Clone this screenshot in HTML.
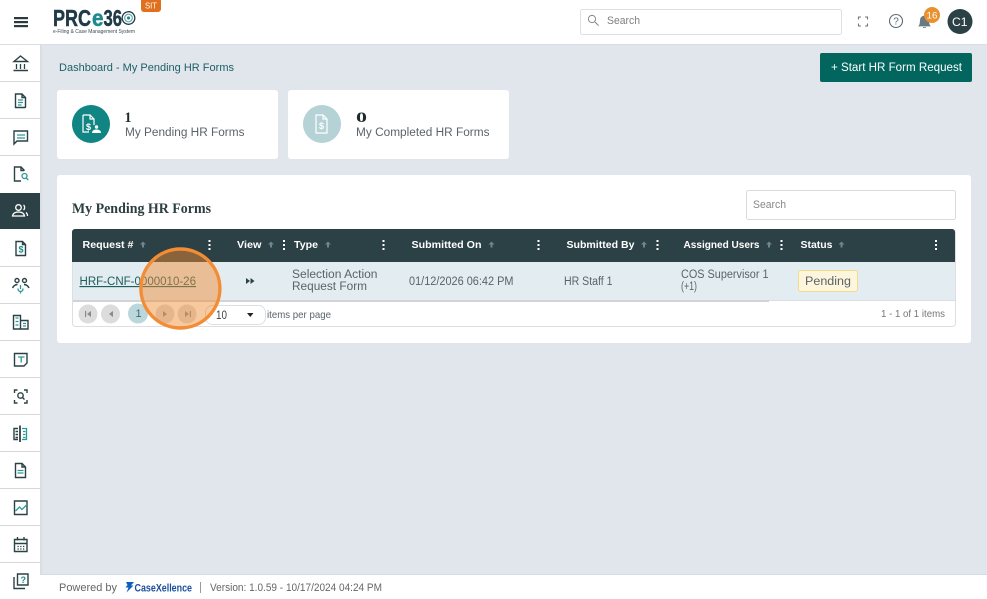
<!DOCTYPE html>
<html><head><meta charset="utf-8"><style>
html,body{margin:0;padding:0;width:987px;height:599px;overflow:hidden;background:#e1e6ec}
svg{display:block}
text{font-family:"Liberation Sans",sans-serif;font-size:11.5px;fill:#5a6468}
.s{font-family:"Liberation Serif",serif;font-weight:700;fill:#1d2a2c}
.h{fill:#fff;font-weight:700;font-size:10.5px}
.i{fill:none;stroke:#2c4145;stroke-width:1.4}
.t{fill:none;stroke:#2a9a98;stroke-width:1.3}
</style></head><body>
<svg width="987" height="599" viewBox="0 0 987 599" xmlns="http://www.w3.org/2000/svg">
<rect width="987" height="599" fill="#e1e6ec"/>
<!-- sidebar -->
<rect x="40" y="44" width="2" height="530" fill="#d9dee4"/>
<rect x="0" y="44" width="40" height="555" fill="#fff"/>
<g fill="#d8d8d8">
<rect y="81" width="40" height="1"/><rect y="118" width="40" height="1"/><rect y="155" width="40" height="1"/>
<rect y="266" width="40" height="1"/><rect y="303" width="40" height="1"/><rect y="340" width="40" height="1"/><rect y="377" width="40" height="1"/><rect y="414" width="40" height="1"/><rect y="451" width="40" height="1"/><rect y="488" width="40" height="1"/><rect y="525" width="40" height="1"/><rect y="562" width="40" height="1"/>
</g>
<rect y="193" width="40" height="36" fill="#2c4145"/>
<!-- header -->
<rect y="574" x="40" width="947" height="1" fill="#d5dbe1"/>
<rect x="40" y="575" width="947" height="24" fill="#fff"/>
<rect width="987" height="44" fill="#fff"/>
<rect y="44" width="987" height="1" fill="#d9dee3"/>
<g fill="#2c3a3e"><rect x="14" y="17" width="14" height="2.2"/><rect x="14" y="21" width="14" height="2.2"/><rect x="14" y="25" width="14" height="2.2"/></g>
<!-- logo -->
<text x="53" y="26" font-weight="700" style="font-size:23px;fill:#1f3b47;stroke:#1f3b47;stroke-width:.5" textLength="38" lengthAdjust="spacingAndGlyphs">PRC</text>
<text x="92" y="26" font-weight="700" style="font-size:23px;fill:#1d8a8c;stroke:#1d8a8c;stroke-width:.5" textLength="11.5" lengthAdjust="spacingAndGlyphs">e</text>
<text x="103.500" y="26" font-weight="700" style="font-size:23px;fill:#1f3b47;stroke:#1f3b47;stroke-width:.5" textLength="18.500" lengthAdjust="spacingAndGlyphs">36</text>
<circle cx="128.500" cy="18" r="6.300" fill="none" stroke="#1f3b47" stroke-width="1.300"/>
<circle cx="128.500" cy="18" r="3.800" fill="none" stroke="#6fa7ab" stroke-width="1.200"/>
<circle cx="128.500" cy="18" r="1.600" fill="#1d8a8c"/>
<text x="53" y="33" style="font-size:5px;fill:#3b4a50" textLength="82" lengthAdjust="spacingAndGlyphs">e-Filing &amp; Case Management System</text>
<path d="M141 0h20v9a3 3 0 0 1-3 3h-14a3 3 0 0 1-3-3z" fill="#e0701d"/>
<text x="145" y="8.500" style="font-size:8px;fill:#fff" textLength="12" lengthAdjust="spacingAndGlyphs">SIT</text>
<!-- top search -->
<rect x="580.500" y="9.500" width="261" height="25" rx="2" fill="#fff" stroke="#dcdfe3"/>
<circle cx="592" cy="19" r="3.600" fill="none" stroke="#888" stroke-width="1"/><path d="M595 22l3.600 3.600" stroke="#888" stroke-width="1"/>
<text x="607" y="24" style="font-size:11px;fill:#808080" textLength="33" lengthAdjust="spacingAndGlyphs">Search</text>
<path d="M858.500 19.500v-2.500h2.500M865 17h2.500v2.500M867.500 23.500v2.500H865M861 26h-2.500v-2.500" fill="none" stroke="#6a787c" stroke-width="1.100"/>
<circle cx="896" cy="21" r="6.500" fill="none" stroke="#5a6a70" stroke-width="1.100"/>
<text x="893.200" y="24.600" style="font-size:10px;fill:#5a6a70">?</text>
<path d="M919 26c1.500-1.500 1-3.500 1.500-6a4 4 0 0 1 8 0c.5 2.500 0 4.500 1.500 6zM923 27.500h3" fill="#6a7a80" stroke="#6a7a80" stroke-width=".8"/>
<circle cx="932" cy="15" r="8" fill="#e8912d"/>
<text x="926.500" y="18.500" style="font-size:9.500px;fill:#fff" textLength="11" lengthAdjust="spacingAndGlyphs">16</text>
<circle cx="960" cy="21.500" r="12.500" fill="#2c4145"/>
<text x="952" y="26" style="font-size:12px;fill:#fff" textLength="15.500" lengthAdjust="spacingAndGlyphs">C1</text>
<!-- side icons -->
<g class="i">
<path d="M14 61.500L20.500 56l7 5.500zM13.500 70.500h14.500"/>
<path d="M15.500 94h6.500l3.500 3.500V107a.5.5 0 0 1-.5.500H15.500zM22 94v3.500h3.500"/>
<path d="M14 131h13.500v10H17l-3 3z"/>
<path d="M24 171v-1l-3-3h-6.500v14H21M21 167v3.500h3"/>
<path d="M16 241.500h6.500l3 3V255.500H16zM22.500 241.500v3h3"/>
<circle cx="17" cy="280.500" r="2"/><circle cx="24.500" cy="280.500" r="2"/><path d="M12.500 288c1-2 3-3.500 5-3.500M29 288c-1-2-3-3.500-5-3.500"/>
<path d="M13.500 315.500h7v13.500h-7zM20.500 320.500h7.500v8.500h-7.500"/>
<path d="M14.500 353.500h12.500v9.500l-3 3h-9.500z"/>
<path d="M14.500 393v-3h3M24 390h3v3M27 400v3h-3M17.500 403h-3v-3"/><circle cx="20.500" cy="395.500" r="2.700"/><path d="M22.500 397.500l2 2"/>
<path d="M20 425.500v16.500" stroke-width="1.800"/><path d="M18 428.500h-4v11h4M15.500 431.500h2.500M15.500 434.500h2.500M15.500 437.500h2.500"/>
<path d="M15.500 463.500h6.500l3.500 3.500V477.500h-10zM22 463.500v3.500h3.500"/>
<path d="M14.500 501h12.500v13.500H14.500z"/>
<path d="M14.500 539.500h12.500v12H14.500zM14.500 543.500h12.500M17.500 537v3.500M24 537v3.500"/>
<path d="M17.500 574h10.500v11H17.500zM14 577v11.500h11"/>
</g>
<g class="t">
<path d="M16.500 64v5M20.500 64v5M24.500 64v5" stroke="#2c4145"/>
<path d="M18 100h5M18 102.500h5M18 105h3.500"/>
<path d="M17 135h8M17 138h8"/>
<circle cx="24.500" cy="176" r="2.500"/><path d="M26.300 178l2 2"/>
<path d="M20.500 285v4"/><path d="M18 288.500c0 2 1 3 2.500 3s2.500-1 2.500-3M20.500 291.500v2"/>
<path d="M15.500 318h3M15.500 321.500h3M15.500 325h3M23 323.500h3M23 326h3"/>
<path d="M18 357h6.500M21.200 357v5.500"/>
<path d="M22 428.500h4.500v11H22M23 431.500h2.500M23 434.500h2.500M23 437.500h2.500"/>
<path d="M17.500 470.500h6M17.500 473h6"/>
<path d="M15.500 511l4-4 2.500 2.500 5-5"/>
<path d="M17.500 546.500h1.300M20.200 546.500h1.300M23 546.500h1.300M17.500 549h1.300M20.200 549h1.300M23 549h1.300" stroke="#2c4145"/>
</g>
<text x="18.500" y="252.500" style="font-size:9px;font-weight:700;fill:#1d8a88">$</text>
<text x="20.500" y="583" style="font-size:9px;font-weight:700;fill:#1d8a88">?</text>
<g fill="none" stroke="#fff" stroke-width="1.300">
<circle cx="18.500" cy="207.500" r="2.800"/><path d="M12.500 216c.5-3 3-4 6-4s5.500 1 6 4z"/><path d="M23.500 205c1.500 1 1.500 4 0 5M26 212.500c1 .8 1.500 2 1.500 3.500"/>
</g>
<!-- breadcrumb & button -->
<text x="59" y="71" style="font-size:11px;fill:#1d5f68" textLength="175" lengthAdjust="spacingAndGlyphs">Dashboard - My Pending HR Forms</text>
<rect x="820" y="53" width="152" height="29" rx="2" fill="#02665f"/>
<text x="831" y="71" style="font-size:11.500px;fill:#fff" textLength="131" lengthAdjust="spacingAndGlyphs">+ Start HR Form Request</text>
<!-- cards -->
<rect x="57" y="90" width="221" height="69" rx="3" fill="#fff"/>
<rect x="288" y="90" width="221" height="69" rx="3" fill="#fff"/>
<circle cx="91" cy="124" r="19" fill="#118584"/>
<circle cx="322" cy="124" r="19" fill="#b5d2d6"/>
<g fill="none" stroke="#fff" stroke-width="1.200">
<path d="M83 115h7l4 4v6M83 115v17h6M90 115v4h4"/>
<path d="M316 115h7l4 4v14h-11zM323 115v4h4"/>
</g>
<text x="86" y="130" style="font-size:9px;font-weight:700;fill:#fff">$</text>
<text x="319" y="129" style="font-size:9px;font-weight:700;fill:#fff">$</text>
<circle cx="96.500" cy="127" r="1.700" fill="#fff"/><path d="M92 133c0-2.500 2-3.500 4.500-3.500s4.500 1 4.500 3.500z" fill="#fff"/>
<text class="s" x="124.500" y="122" style="font-size:15px" textLength="7" lengthAdjust="spacingAndGlyphs">1</text>
<text x="125" y="136" textLength="119.500" lengthAdjust="spacingAndGlyphs">My Pending HR Forms</text>
<text class="s" x="356" y="122" style="font-size:15px" textLength="11" lengthAdjust="spacingAndGlyphs">0</text>
<text x="356" y="136" textLength="133.500" lengthAdjust="spacingAndGlyphs">My Completed HR Forms</text>
<!-- table card -->
<rect x="57" y="175" width="914" height="168" rx="3" fill="#fff"/>
<text class="s" x="72" y="213" style="font-size:14.500px;fill:#2c3e40" textLength="139" lengthAdjust="spacingAndGlyphs">My Pending HR Forms</text>
<rect x="746.500" y="190.500" width="209" height="29" rx="2" fill="#fff" stroke="#d8dbde"/>
<text x="753" y="208" style="font-size:11px;fill:#888" textLength="33" lengthAdjust="spacingAndGlyphs">Search</text>
<rect x="72.500" y="229.500" width="883" height="97" rx="3" fill="#fff" stroke="#dcdfe2"/>
<path d="M72 262v-30a3 3 0 0 1 3-3h877a3 3 0 0 1 3 3v30z" fill="#2c4145"/>
<rect x="73" y="262" width="882" height="38" fill="#e3ecf0"/>
<rect x="73" y="300" width="696" height="2" fill="#d0d4d8"/>
<rect x="769" y="300" width="186" height="1" fill="#dcdfe2"/>
<g>
<text class="h" x="82.500" y="248" textLength="51" lengthAdjust="spacingAndGlyphs">Request #</text>
<text class="h" x="237" y="248" textLength="24.500" lengthAdjust="spacingAndGlyphs">View</text>
<text class="h" x="294" y="248" textLength="24" lengthAdjust="spacingAndGlyphs">Type</text>
<text class="h" x="411.500" y="248" textLength="70" lengthAdjust="spacingAndGlyphs">Submitted On</text>
<text class="h" x="566.500" y="248" textLength="68" lengthAdjust="spacingAndGlyphs">Submitted By</text>
<text class="h" x="683.500" y="248" textLength="76" lengthAdjust="spacingAndGlyphs">Assigned Users</text>
<text class="h" x="800.500" y="248" textLength="32" lengthAdjust="spacingAndGlyphs">Status</text>
</g>
<g fill="#71858a">
<path d="M143 241.500l3 3h-2v3h-2v-3h-2z"/>
<path d="M271 241.500l3 3h-2v3h-2v-3h-2z"/><path d="M328 241.500l3 3h-2v3h-2v-3h-2z"/><path d="M491.500 241.500l3 3h-2v3h-2v-3h-2z"/><path d="M644 241.500l3 3h-2v3h-2v-3h-2z"/><path d="M769 241.500l3 3h-2v3h-2v-3h-2z"/><path d="M841.500 241.500l3 3h-2v3h-2v-3h-2z"/>
</g>
<g fill="#fff">
<rect x="208.500" y="240" width="2" height="2"/><rect x="208.500" y="244" width="2" height="2"/><rect x="208.500" y="248" width="2" height="2"/>
<rect x="283" y="240" width="2" height="2"/><rect x="283" y="244" width="2" height="2"/><rect x="283" y="248" width="2" height="2"/>
<rect x="382.500" y="240" width="2" height="2"/><rect x="382.500" y="244" width="2" height="2"/><rect x="382.500" y="248" width="2" height="2"/>
<rect x="537.500" y="240" width="2" height="2"/><rect x="537.500" y="244" width="2" height="2"/><rect x="537.500" y="248" width="2" height="2"/>
<rect x="656.500" y="240" width="2" height="2"/><rect x="656.500" y="244" width="2" height="2"/><rect x="656.500" y="248" width="2" height="2"/>
<rect x="780.500" y="240" width="2" height="2"/><rect x="780.500" y="244" width="2" height="2"/><rect x="780.500" y="248" width="2" height="2"/>
<rect x="935" y="240" width="2" height="2"/><rect x="935" y="244" width="2" height="2"/><rect x="935" y="248" width="2" height="2"/>
</g>
<!-- row -->
<text x="79.500" y="285" style="fill:#1c5e5e" text-decoration="underline" textLength="116.500" lengthAdjust="spacingAndGlyphs">HRF-CNF-0000010-26</text>
<path d="M246 278l4 3-4 3zM250.500 278l4 3-4 3z" fill="#2c4145"/>
<text x="292" y="278" textLength="85.500" lengthAdjust="spacingAndGlyphs">Selection Action</text>
<text x="292" y="290" textLength="75" lengthAdjust="spacingAndGlyphs">Request Form</text>
<text x="409" y="285" textLength="104.500" lengthAdjust="spacingAndGlyphs">01/12/2026 06:42 PM</text>
<text x="564" y="285" textLength="48.500" lengthAdjust="spacingAndGlyphs">HR Staff 1</text>
<text x="681" y="278" textLength="87.500" lengthAdjust="spacingAndGlyphs">COS Supervisor 1</text>
<text x="681" y="290" textLength="16" lengthAdjust="spacingAndGlyphs">(+1)</text>
<rect x="798.500" y="270.500" width="59" height="21" rx="2.500" fill="#fdf6dc" stroke="#f2dc8c"/>
<text x="805" y="285" textLength="46" lengthAdjust="spacingAndGlyphs">Pending</text>
<!-- pager -->
<g fill="#dcdcdc"><circle cx="88" cy="314" r="9.500"/><circle cx="110.500" cy="314" r="9.500"/><circle cx="165" cy="314" r="9.500"/><circle cx="187" cy="314" r="9.500"/></g>
<circle cx="138" cy="313.500" r="10" fill="#bcd7dc"/>
<text x="135.500" y="317" style="font-size:11px;fill:#3a6a70">1</text>
<g fill="#8a8a8a">
<path d="M85 311h1.200v6H85zM91 311v6l-4-3zM113 311v6l-4-3zM163 311l4 3-4 3zM185 311l4 3-4 3zM189.800 311h1.200v6h-1.200z"/>
</g>
<rect x="205.500" y="305.500" width="60" height="19" rx="7" fill="#fff" stroke="#dcdfe2"/>
<text x="216" y="319" style="font-size:12px;fill:#444" textLength="11" lengthAdjust="spacingAndGlyphs">10</text>
<path d="M247 313h6.500l-3.250 4z" fill="#222"/>
<text x="267" y="318" style="font-size:10.500px" textLength="64" lengthAdjust="spacingAndGlyphs">items per page</text>
<text x="881" y="317" style="font-size:10.500px;fill:#777" textLength="64" lengthAdjust="spacingAndGlyphs">1 - 1 of 1 items</text>
<!-- highlight -->
<circle cx="180.400" cy="288.500" r="39.500" fill="#f08a30" fill-opacity=".47" stroke="#f28c35" stroke-width="3.400"/>
<!-- footer -->
<text x="59" y="591" style="font-size:11px;fill:#666" textLength="58" lengthAdjust="spacingAndGlyphs">Powered by</text>
<path d="M126 582h8l-3 3.500h2.500l-7 7 2-5h-3l2-2.500z" fill="#0a5fc4"/>
<text x="134.500" y="591.500" font-weight="700" style="font-size:11px;fill:#1d4f9e" textLength="57.500" lengthAdjust="spacingAndGlyphs">CaseXellence</text>
<rect x="200" y="582" width="1" height="11" fill="#999"/>
<text x="210" y="591" style="font-size:11px;fill:#666" textLength="172" lengthAdjust="spacingAndGlyphs">Version: 1.0.59 - 10/17/2024 04:24 PM</text>
</svg>
</body></html>
